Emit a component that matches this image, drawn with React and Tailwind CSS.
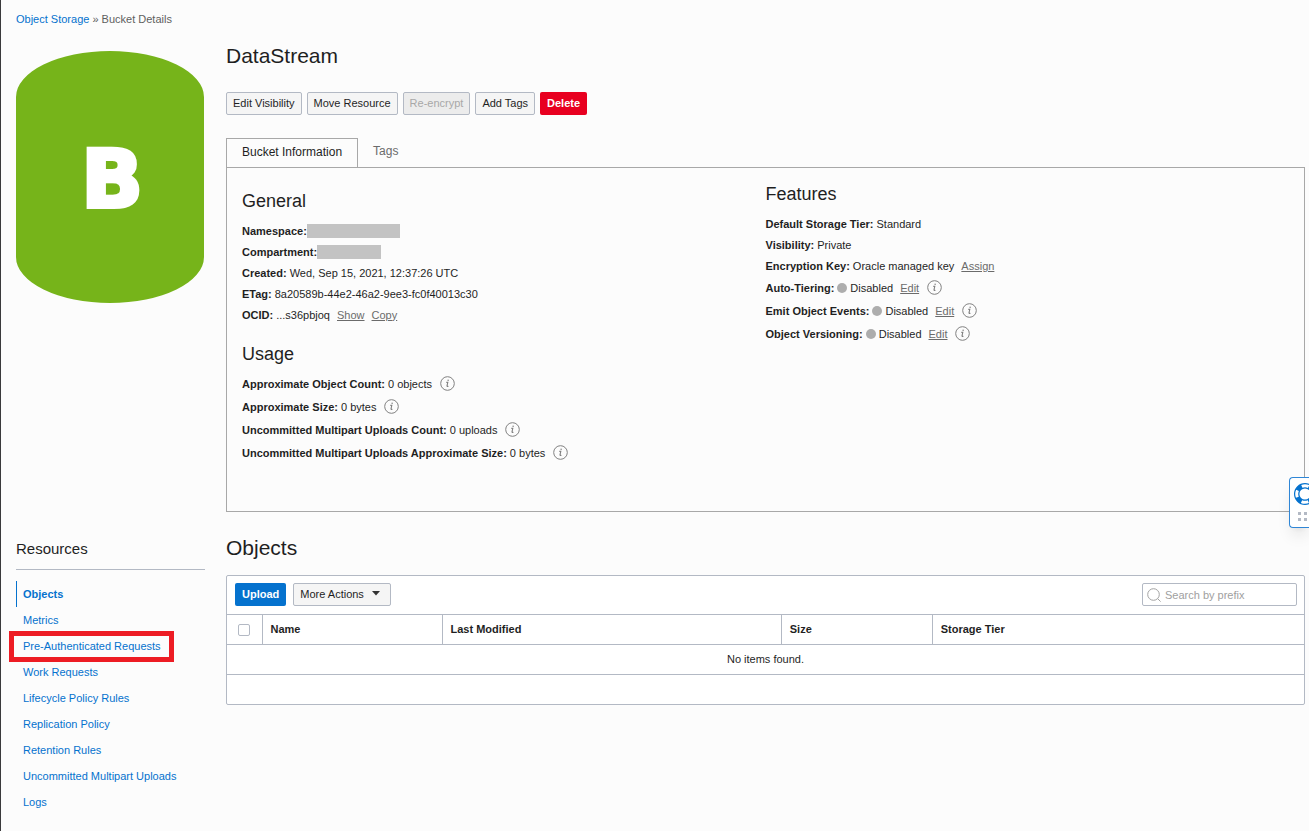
const linkBlue = "text-[#0572ce] hover:underline";

function InfoIcon({ label }) {
  return (
    <button type="button" aria-label={`About ${label}`} className="ml-2 block size-[15px] shrink-0">
      <svg width="15" height="15" viewBox="0 0 15 15" fill="none" stroke="#808080" className="block">
        <circle cx="7.5" cy="7.5" r="6.8" strokeWidth="1" />
        <path d="M6.3 6.4h1.5L7 9.8c-.1.7.5.9 1.3.2" strokeWidth="1.1" />
        <circle cx="8.1" cy="4.3" r="0.75" fill="#808080" stroke="none" />
      </svg>
    </button>
  );
}

function Action({ children }) {
  return (
    <a href="#" className="ml-[7px] text-[#6b6b6b] underline">
      {children}
    </a>
  );
}

function Row({ label, value, tall, dot, actions = [], info, children }) {
  return (
    <div className={tall ? "flex h-[23px] items-center" : "flex h-[21px] items-center"}>
      <dt className="font-bold">{label}:</dt>
      <dd className="flex items-center">
        {dot && <span className="ml-[3px] size-2.5 rounded-full bg-[#adadad]" />}
        {value && <span className="ml-[3px]">{value}</span>}
        {children}
        {actions.map((a) => (
          <Action key={a}>{a}</Action>
        ))}
        {info && <InfoIcon label={label} />}
      </dd>
    </div>
  );
}

function Button({ children, disabled }) {
  return (
    <button
      type="button"
      disabled={disabled}
      className="flex h-[23px] items-center rounded-xs border border-[#b3b9c4] bg-[#f5f5f5] px-1.5 pb-0.5 disabled:bg-[#ececec] disabled:text-[#a8a8a8]"
    >
      {children}
    </button>
  );
}

function BucketLogo() {
  return (
    <svg viewBox="0 0 188 252" className="block w-[188px]" role="img" aria-label="Bucket">
      <path d="M0 46A94 46 0 0 1 188 46V206A94 46 0 0 1 0 206z" fill="#76b41a" />
      <text
        x="96"
        y="156"
        textAnchor="middle"
        fontFamily="'DejaVu Sans', sans-serif"
        fontWeight="700"
        fontSize="81"
        fill="#fff"
        stroke="#fff"
        strokeWidth="4"
      >
        B
      </text>
    </svg>
  );
}

const resources = [
  "Objects",
  "Metrics",
  "Pre-Authenticated Requests",
  "Work Requests",
  "Lifecycle Policy Rules",
  "Replication Policy",
  "Retention Rules",
  "Uncommitted Multipart Uploads",
  "Logs",
];

function Resources() {
  return (
    <nav aria-label="Resources">
      <h2 className="border-b border-[#b3b9c4] pt-3 pb-2.5 text-[15px] leading-5">Resources</h2>
      <ul className="mt-[11px]">
        {resources.map((name, i) => (
          <li key={name} className="relative">
            <a
              href="#"
              className={
                i === 0
                  ? "flex h-[26px] items-center border-l border-[#0572ce] pl-1.5 font-bold text-[#0572ce]"
                  : "flex h-[26px] items-center pl-[7px] text-[#0572ce]"
              }
            >
              {name}
            </a>
            {i === 2 && (
              <span className="pointer-events-none absolute -top-0.5 -left-[7px] h-[31px] w-[165px] border-5 border-[#ed1c24]" />
            )}
          </li>
        ))}
      </ul>
    </nav>
  );
}

function BucketInformation() {
  return (
    <div>
      <div role="tablist" className="flex items-end">
        <button
          type="button"
          role="tab"
          aria-selected="true"
          className="flex h-[29px] items-center border border-b-0 border-[#a8a8a8] bg-[#fcfcfc] px-[15px] pb-0.5 text-xs"
        >
          Bucket Information
        </button>
        <button
          type="button"
          role="tab"
          aria-selected="false"
          className="flex h-[29px] items-center px-[15px] pb-1 text-xs text-[#6b6b6b]"
        >
          Tags
        </button>
      </div>
      <div className="grid min-h-[345px] grid-cols-2 border border-[#a8a8a8]">
        <div className="pt-[21px] pl-[15px]">
          <h2 className="text-lg leading-6">General</h2>
          <dl className="mt-[7px]">
            <Row label="Namespace">
              <span className="h-3.5 w-[93px] bg-[#c3c3c3]" />
            </Row>
            <Row label="Compartment">
              <span className="h-3.5 w-16 bg-[#c3c3c3]" />
            </Row>
            <Row label="Created" value="Wed, Sep 15, 2021, 12:37:26 UTC" />
            <Row label="ETag" value="8a20589b-44e2-46a2-9ee3-fc0f40013c30" />
            <Row label="OCID" value="...s36pbjoq" actions={["Show", "Copy"]} />
          </dl>
          <h2 className="mt-[17px] text-lg leading-6">Usage</h2>
          <dl className="mt-1.5">
            <Row tall label="Approximate Object Count" value="0 objects" info />
            <Row tall label="Approximate Size" value="0 bytes" info />
            <Row tall label="Uncommitted Multipart Uploads Count" value="0 uploads" info />
            <Row tall label="Uncommitted Multipart Uploads Approximate Size" value="0 bytes" info />
          </dl>
        </div>
        <div className="pt-3.5">
          <h2 className="text-lg leading-6">Features</h2>
          <dl className="mt-[7px]">
            <Row label="Default Storage Tier" value="Standard" />
            <Row label="Visibility" value="Private" />
            <Row label="Encryption Key" value="Oracle managed key" actions={["Assign"]} />
            <Row tall dot label="Auto-Tiering" value="Disabled" actions={["Edit"]} info />
            <Row tall dot label="Emit Object Events" value="Disabled" actions={["Edit"]} info />
            <Row tall dot label="Object Versioning" value="Disabled" actions={["Edit"]} info />
          </dl>
        </div>
      </div>
    </div>
  );
}

function Objects() {
  return (
    <section>
      <h2 className="pt-2 text-[21px] leading-7">Objects</h2>
      <div className="mt-[13px] rounded-xs border border-[#b3b9c4] bg-white">
        <div className="flex h-[38px] items-start gap-[7px] pt-[7px] pr-[7px] pl-2">
          <button type="button" className="h-[23px] rounded-xs bg-[#0572ce] px-[7px] pb-px font-bold text-white">
            Upload
          </button>
          <Button>
            More Actions
            <svg width="8" height="5" viewBox="0 0 8 5" className="mr-1 ml-2">
              <path d="M0 0h8L4 4.5z" fill="#333" />
            </svg>
          </Button>
          <label className="ml-auto flex h-[23px] w-[155px] items-center gap-1 rounded-xs border border-[#b3b9c4] pl-1">
            <svg width="14" height="14" viewBox="0 0 14 14" fill="none" stroke="#a3a3a3" className="shrink-0">
              <circle cx="6.5" cy="6.5" r="5.8" />
              <path d="M10.6 10.6l3 3" />
            </svg>
            <input
              type="text"
              aria-label="Search by prefix"
              placeholder="Search by prefix"
              className="w-full min-w-0 bg-transparent outline-none placeholder:text-[#a0a0a0]"
            />
          </label>
        </div>
        <table className="w-full table-fixed border-collapse">
          <colgroup>
            <col className="w-[35px]" />
            <col className="w-[180px]" />
            <col className="w-[31.5%]" />
            <col className="w-[151px]" />
            <col />
          </colgroup>
          <thead>
            <tr className="h-[30px] border-y border-[#b3b9c4]">
              <th>
                <input
                  type="checkbox"
                  aria-label="Select all objects"
                  className="mx-auto block size-3 appearance-none rounded-xs border border-[#b3b9c4] bg-white"
                />
              </th>
              {["Name", "Last Modified", "Size", "Storage Tier"].map((h) => (
                <th key={h} scope="col" className="border-l border-[#b3b9c4] px-2 pb-0.5 text-left font-bold">
                  {h}
                </th>
              ))}
            </tr>
          </thead>
          <tbody>
            <tr className="h-[30px] border-b border-[#b3b9c4]">
              <td colSpan="5" className="pb-0.5 text-center">
                No items found.
              </td>
            </tr>
            <tr className="h-[29px]">
              <td colSpan="5" />
            </tr>
          </tbody>
        </table>
      </div>
    </section>
  );
}

function HelpWidget() {
  return (
    <button
      type="button"
      aria-label="Help"
      className="fixed top-[477px] right-0 h-[51px] w-5 overflow-hidden rounded-l-sm border border-r-0 border-[#2f86d6] bg-white shadow-lg"
    >
      <svg width="19" height="49" viewBox="0 0 19 49" className="block">
        <circle cx="15" cy="16" r="8.3" fill="none" stroke="#0572ce" strokeWidth="5.4" />
        <circle
          cx="15"
          cy="16"
          r="8.3"
          fill="none"
          stroke="#fff"
          strokeWidth="3"
          strokeDasharray="7 6.04"
          strokeDashoffset="3.5"
        />
        <path d="M8 34h3v3H8zM14 34h3v3h-3zM8 40h3v3H8zM14 40h3v3h-3z" fill="#b3b9c4" />
      </svg>
    </button>
  );
}

export default function App() {
  return (
    <div className="min-h-screen border-l border-[#3a3a3c] bg-[#fcfcfc] pr-1 pl-[15px] font-['Liberation_Sans',Arial,sans-serif] text-[11px] leading-4 text-[#1f1f1f]">
      <nav aria-label="Breadcrumb" className="pt-[11px] text-[#5f5f5f]">
        <a href="#" className={linkBlue}>
          Object Storage
        </a>{" "}
        » Bucket Details
      </nav>
      <div className="mt-[15px] grid grid-cols-[189px_1fr] gap-x-[21px]">
        <div className="pt-[9px]">
          <BucketLogo />
        </div>
        <main>
          <h1 className="text-[21px] leading-7">DataStream</h1>
          <div className="mt-[22px] mb-[23px] flex gap-[5px]">
            <Button>Edit Visibility</Button>
            <Button>Move Resource</Button>
            <Button disabled>Re-encrypt</Button>
            <Button>Add Tags</Button>
            <button type="button" className="h-[23px] rounded-xs bg-[#e80020] px-[7px] pb-px font-bold text-white">
              Delete
            </button>
          </div>
          <BucketInformation />
        </main>
        <div className="pt-[15px]">
          <Resources />
        </div>
        <div className="pt-[14px]">
          <Objects />
        </div>
      </div>
      <HelpWidget />
    </div>
  );
}
